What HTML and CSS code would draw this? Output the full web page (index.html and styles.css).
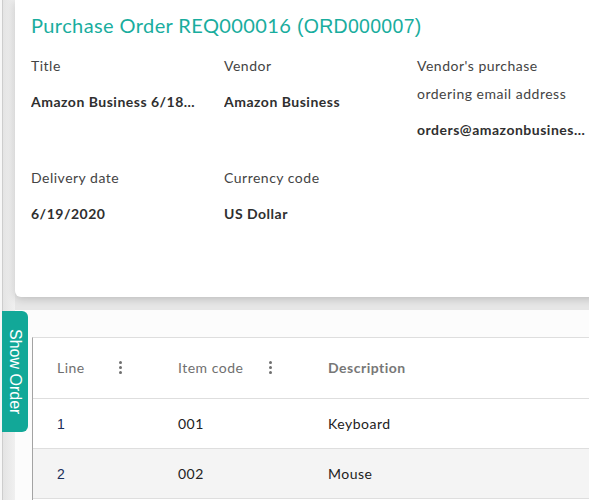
FILE: index.html
```html
<!DOCTYPE html>
<html>
<head>
<meta charset="utf-8">
<link rel="stylesheet" href="styles.css">
</head>
<body>
<div class="rail"></div>
<div class="main">
  <section class="card">
    <h1 class="title">Purchase Order REQ000016 <span class="ord">(ORD000007)</span></h1>
    <div class="fields">
      <div class="field">
        <div class="label">Title</div>
        <div class="value">Amazon Business 6/18/2020 order</div>
      </div>
      <div class="field">
        <div class="label">Vendor</div>
        <div class="value">Amazon Business</div>
      </div>
      <div class="field">
        <div class="label">Vendor's purchase<br>ordering email address</div>
        <div class="value">orders@amazonbusiness.com</div>
      </div>
      <div class="field">
        <div class="label">Delivery date</div>
        <div class="value">6/19/2020</div>
      </div>
      <div class="field">
        <div class="label">Currency code</div>
        <div class="value">US Dollar</div>
      </div>
    </div>
  </section>
  <section class="panel">
    <div class="grid">
      <div class="th"><span class="th-text">Line</span><span class="kebab"><i></i><i></i><i></i></span></div>
      <div class="th"><span class="th-text">Item code</span><span class="kebab"><i></i><i></i><i></i></span></div>
      <div class="th"><span class="th-text desc">Description</span></div>

      <div class="td num">1</div>
      <div class="td">001</div>
      <div class="td">Keyboard</div>

      <div class="td num alt">2</div>
      <div class="td alt">002</div>
      <div class="td alt">Mouse</div>
    </div>
  </section>
</div>
<div class="tab">Show Order</div>
</body>
</html>
```

FILE: styles.css
```css
* { box-sizing: border-box; }
html, body { margin: 0; padding: 0; }
body {
  width: 589px;
  height: 500px;
  overflow: hidden;
  display: flex;
  background: #f7f7f7;
  font-family: "Lato", "Noto Sans", sans-serif;
  position: relative;
}
.rail {
  width: 13px;
  margin-left: 2px;
  flex: none;
  border-left: 1px solid #cdcdcd;
  background: linear-gradient(to right, #e4e4e4, #f0f0f0);
}
.main {
  flex: 1;
  display: flex;
  flex-direction: column;
  background: #e6e6e6;
  min-width: 0;
}
.card {
  height: 297px;
  background: #fff;
  border-radius: 0 0 0 6px;
  box-shadow: 0 2px 8px rgba(0,0,0,0.18);
  padding: 12px 0 0 16px;
  margin-right: -20px;
  position: relative;
  z-index: 1;
}
.title {
  margin: 0;
  font-size: 20px;
  line-height: 26px;
  font-weight: 400;
  letter-spacing: 0.4px;
  color: #19ad9e;
  white-space: nowrap;
}
.ord { font-family: "Liberation Sans", Arial, sans-serif; font-size: 19.5px; letter-spacing: 0.3px; }
.fields {
  margin-top: 13px;
  display: grid;
  grid-template-columns: 193px 193px 193px;
  row-gap: 20px;
  letter-spacing: 0.5px;
}
.label {
  font-size: 14px;
  line-height: 28px;
  color: #444;
}
.value {
  margin-top: 8px;
  font-size: 14px;
  line-height: 28px;
  font-weight: 700;
  color: #2f2f2f;
  width: 170px;
  white-space: nowrap;
  overflow: hidden;
  text-overflow: ellipsis;
}
.panel {
  margin-top: 13px;
  flex: 1;
  background: #fcfcfc;
  padding: 27px 0 0 17px;
}
.grid {
  display: grid;
  grid-template-columns: 121px 150px 1fr;
  border-left: 1px solid #a3a3a3;
  border-top: 1px solid #dedede;
  background: #fff;
  height: 100%;
  grid-auto-rows: 50px;
  grid-template-rows: 61px;
  align-content: start;
  letter-spacing: 0.5px;
}
.th {
  display: flex;
  align-items: center;
  justify-content: space-between;
  padding: 0 32px 2px 24px;
  border-bottom: 1px solid #dedede;
  font-size: 14px;
  color: #6f6f6f;
}
.th-text.desc { font-weight: 700; color: #777; }
.kebab {
  display: flex;
  flex-direction: column;
  gap: 2px;
}
.kebab i {
  display: block;
  width: 3px;
  height: 3px;
  border-radius: 50%;
  background: #6f6f6f;
}
.td {
  display: flex;
  align-items: center;
  padding-left: 24px;
  border-bottom: 1px solid #dedede;
  font-size: 14px;
  color: #222;
}
.td.num { font-family: "Liberation Sans", Arial, sans-serif; color: #1b2f5a; letter-spacing: 0; }
.td.alt { background: #f4f4f4; }
.tab {
  position: absolute;
  left: 2px;
  top: 311px;
  width: 26px;
  height: 121px;
  background: #12a898;
  border-radius: 0 6px 6px 0;
  writing-mode: vertical-rl;
  color: #fff;
  font-family: "Liberation Sans", Arial, sans-serif;
  font-size: 16px;
  display: flex;
  align-items: center;
  justify-content: center;
  z-index: 2;
}
```
